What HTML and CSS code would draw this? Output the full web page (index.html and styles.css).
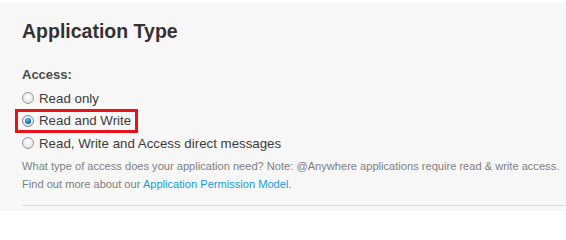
FILE: index.html
```html
<!DOCTYPE html>
<html>
<head>
<meta charset="utf-8">
<link rel="stylesheet" href="styles.css">
</head>
<body>
<div class="panel">
  <h2 class="title">Application Type</h2>
  <div class="field-label">Access:</div>
  <div class="options">
    <label class="option"><input type="radio" name="access" class="radio"><span>Read only</span></label>
    <label class="option option-highlight"><input type="radio" name="access" class="radio" checked><span>Read and Write</span></label>
    <label class="option"><input type="radio" name="access" class="radio"><span>Read, Write and Access direct messages</span></label>
  </div>
  <p class="help">What type of access does your application need? Note: @Anywhere applications require read &amp; write access.<br>Find out more about our <a class="link" href="#">Application Permission Model</a>.</p>
  <div class="divider"></div>
</div>
</body>
</html>
```
FILE: styles.css
```css
html, body {
  margin: 0;
  background: #ffffff;
}
body {
  font-family: "Liberation Sans", Arial, sans-serif;
  width: 566px;
  height: 211px;
  overflow: hidden;
}
.panel {
  margin-top: 2px;
  background: #f7f7f7;
  height: 209px;
  padding: 0 0 0 22px;
  box-sizing: border-box;
  display: flex;
  flex-direction: column;
}
.title {
  margin: 17px 0 0;
  font-size: 19.5px;
  line-height: 24px;
  font-weight: bold;
  color: #333333;
}
.field-label {
  margin-top: 23px;
  font-size: 13px;
  line-height: 18px;
  font-weight: bold;
  color: #4a4a4a;
}
.options {
  display: flex;
  flex-direction: column;
  margin-top: 3px;
}
.option {
  display: flex;
  align-items: center;
  gap: 5px;
  height: 22.5px;
  font-size: 13.3px;
  color: #3c3c3c;
  width: fit-content;
}
.option-highlight {
  height: 18.5px;
  border: 3px solid #e8121b;
  margin: -1px 0 -1px -7px;
  padding: 0 4px;
}
.radio {
  appearance: none;
  -webkit-appearance: none;
  margin: 0;
  width: 12px;
  height: 12px;
  border-radius: 50%;
  border: 1px solid #9a9a9a;
  box-sizing: border-box;
  background: radial-gradient(circle at 50% 40%, #ffffff 0%, #ececec 55%, #d4d4d4 100%);
  position: relative;
  flex: none;
}
.radio:checked {
  border-color: #7a8a99;
}
.radio:checked::after {
  content: "";
  position: absolute;
  left: 2px;
  top: 2px;
  width: 6px;
  height: 6px;
  border-radius: 50%;
  background: radial-gradient(circle at 40% 35%, #6fc0f0 0%, #1a78c0 50%, #0b3f72 100%);
}
.help {
  margin: 2px 0 0;
  font-size: 11.1px;
  line-height: 18px;
  color: #808080;
}
.link {
  color: #1a9bd7;
  text-decoration: none;
}
.divider {
  margin-top: 12px;
  height: 1px;
  background: #dcdcdc;
}
```
